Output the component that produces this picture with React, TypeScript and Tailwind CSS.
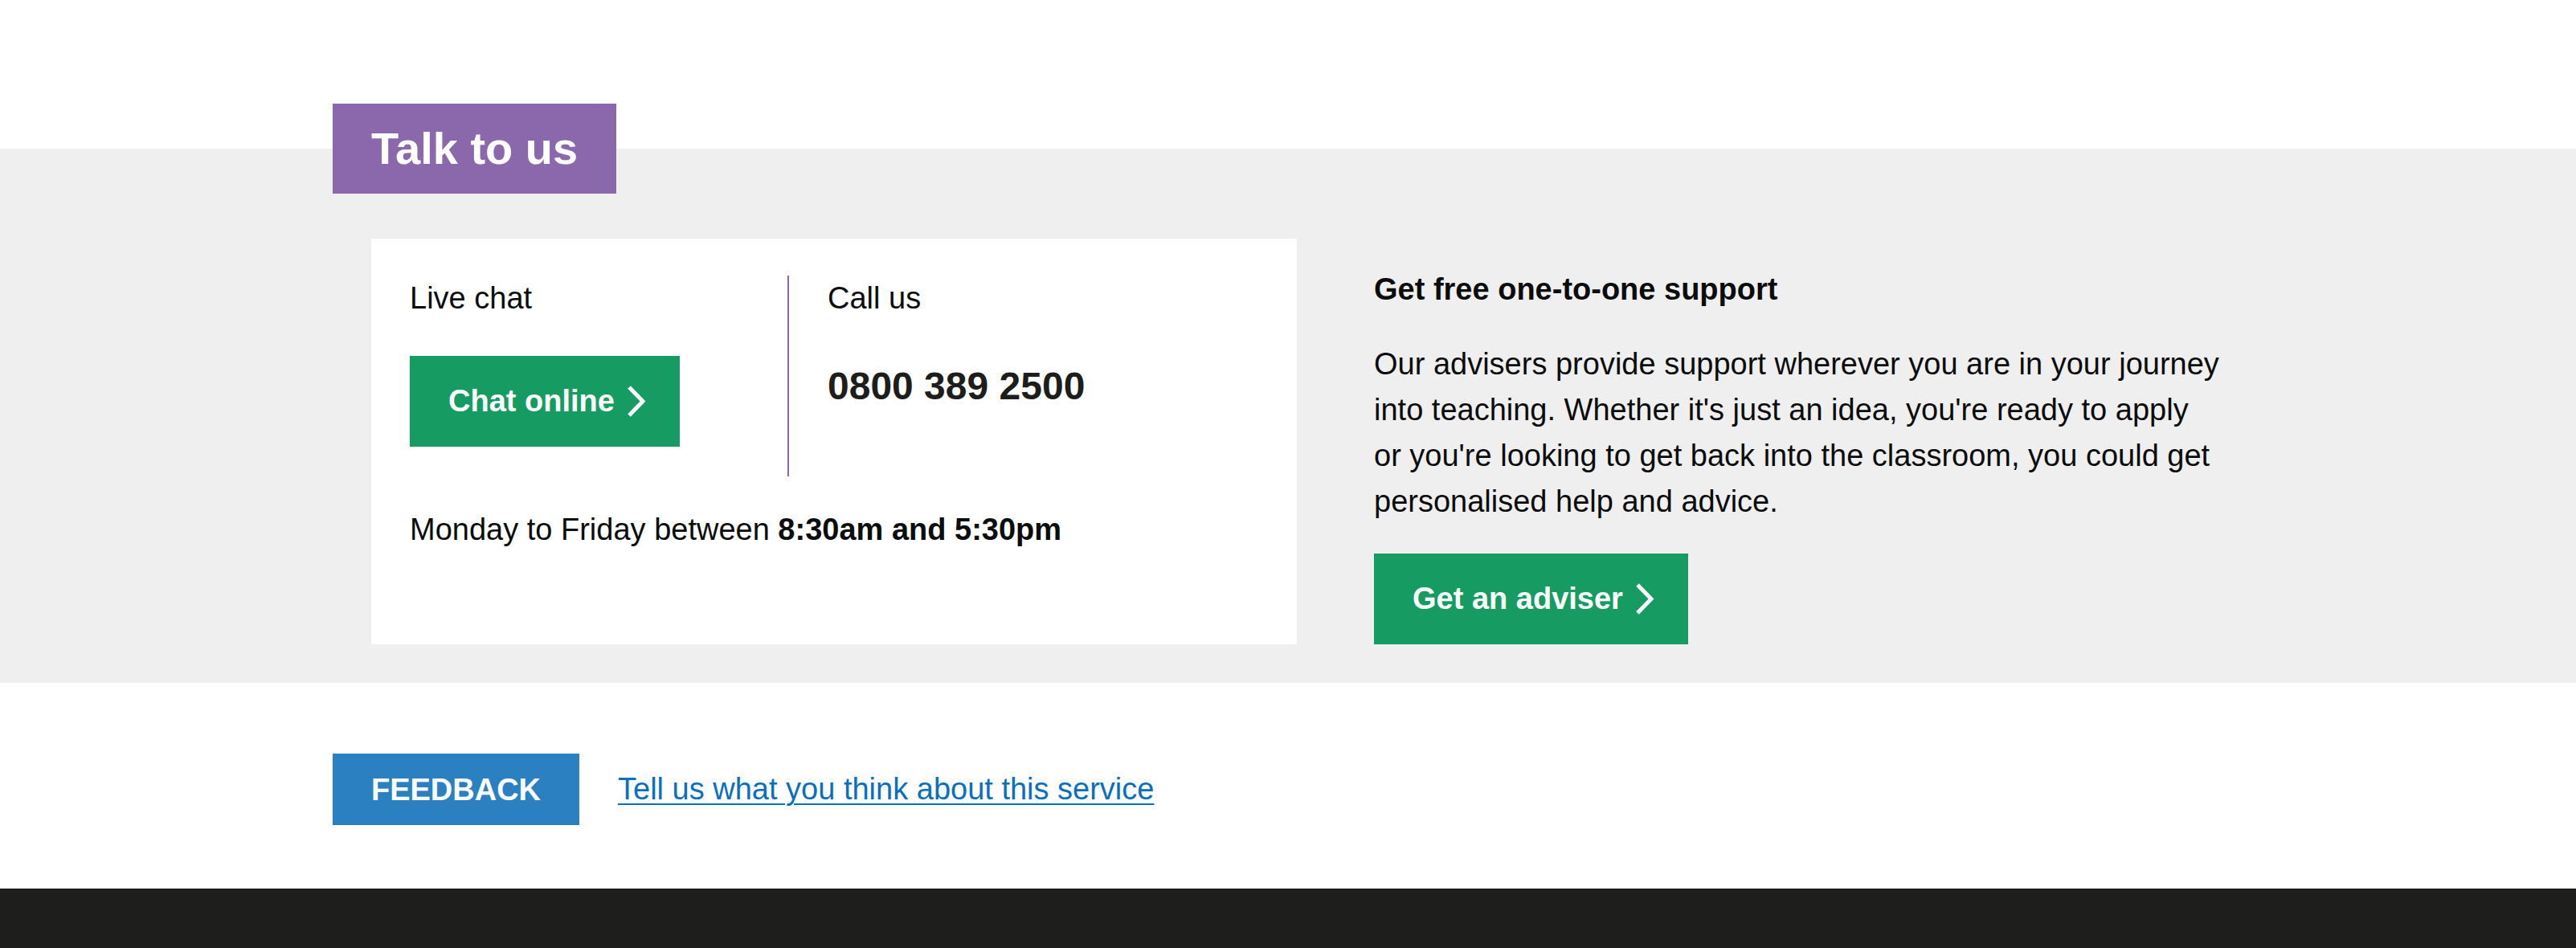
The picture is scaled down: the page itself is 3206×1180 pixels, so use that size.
import React from "react";

function Chevron() {
  return (
    <svg width="24" height="39" viewBox="0 0 24 39" fill="none" aria-hidden="true">
      <polyline points="3,2 20,19.5 3,37" stroke="#ffffff" strokeWidth="5" fill="none" />
    </svg>
  );
}

export default function App() {
  return (
    <div className="min-h-screen bg-white font-['Liberation_Sans',Arial,sans-serif] text-[#0b0c0c]">
      <section className="pt-[129px]">
        <div className="relative z-10 pl-[414px]">
          <h2 className="flex h-[112px] w-[353px] items-center bg-[#8b67ab] pl-[48px] text-[56px] font-bold leading-none text-white">
            Talk to us
          </h2>
        </div>
        <div className="-mt-[56px] bg-[#efefef] pt-[112px] pb-[48px]">
          <div className="flex items-stretch gap-[96px] pl-[462px]">
            <div className="w-[1152px] bg-white px-[48px] pt-[46px]">
              <div className="flex">
                <div className="w-[470px] pb-[37px]">
                  <p className="text-[38px] leading-[57px]">Live chat</p>
                  <a
                    href="#"
                    className="mt-[43px] flex h-[113px] w-fit items-center gap-[15px] bg-[#169b62] pl-[48px] pr-[42px] text-[38px] font-bold text-white"
                  >
                    Chat online
                    <Chevron />
                  </a>
                </div>
                <div className="border-l-2 border-[#8b67ab] pl-[48px]">
                  <p className="text-[38px] leading-[57px]">Call us</p>
                  <p className="mt-[52px] text-[48px] font-bold leading-[57px] text-[#1d1d1b]">0800 389 2500</p>
                </div>
              </div>
              <p className="mt-[38px] text-[38px] leading-[57px]">
                Monday to Friday between <strong className="font-bold">8:30am and 5:30pm</strong>
              </p>
            </div>
            <div className="w-[1100px] pt-[35px]">
              <h3 className="text-[38px] font-bold leading-[57px]">Get free one-to-one support</h3>
              <p className="mt-[36px] text-[38px] leading-[57px]">
                Our advisers provide support wherever you are in your journey
                <br />
                into teaching. Whether it's just an idea, you're ready to apply
                <br />
                or you're looking to get back into the classroom, you could get
                <br />
                personalised help and advice.
              </p>
              <a
                href="#"
                className="mt-[36px] flex h-[113px] w-fit items-center gap-[15px] bg-[#169b62] pl-[48px] pr-[42px] text-[38px] font-bold text-white"
              >
                Get an adviser
                <Chevron />
              </a>
            </div>
          </div>
        </div>
      </section>
      <section className="flex items-center gap-[48px] pt-[88px] pb-[79px] pl-[414px]">
        <span className="flex h-[89px] w-[307px] items-center justify-center bg-[#2b80c2] text-[38px] font-bold uppercase leading-none text-white">
          Feedback
        </span>
        <a
          href="#"
          className="text-[38px] leading-[57px] text-[#0b6fbf] underline decoration-2 underline-offset-[5px]"
        >
          Tell us what you think about this service
        </a>
      </section>
      <footer className="h-[74px] bg-[#1e1e1c]" />
    </div>
  );
}
